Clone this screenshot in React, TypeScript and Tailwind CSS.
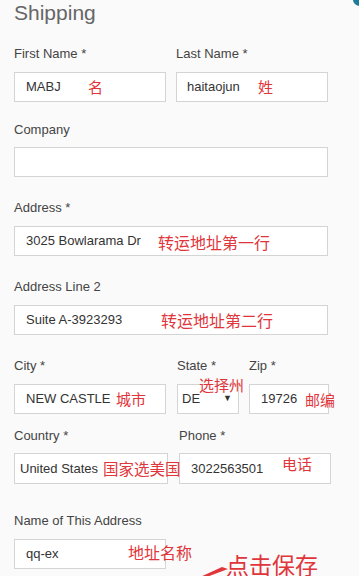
import React from "react";

const sans = "font-['Liberation_Sans','Arimo',Arial,'Noto_Sans_CJK_SC',sans-serif]";
const cjk = "font-['Noto_Sans_CJK_SC','Liberation_Sans',sans-serif]";

function Label({ children }: { children: React.ReactNode }) {
  return <div className="text-[13px] leading-[16px] text-[#444]">{children}</div>;
}

function Field({ value, className = "", pad = "pl-[11px]" }: { value?: string; className?: string; pad?: string }) {
  return (
    <div className={`h-[30px] border border-[#d4d4d4] bg-white flex items-center text-[13px] text-[#333] ${pad} ${className}`}>
      {value}
    </div>
  );
}

function Note({ text, x, y, size = "text-[15px]" }: { text: string; x: number; y: number; size?: string }) {
  return (
    <span
      className={`absolute ${cjk} ${size} leading-none text-[#e0353b] whitespace-nowrap`}
      style={{ left: x, top: y }}
    >
      {text}
    </span>
  );
}

export default function App() {
  return (
    <div className={`relative w-[359px] h-[576px] overflow-hidden bg-[#fafafa] ${sans}`}>
      <div className="px-[14px]">
        <h2 className="text-[21px] leading-[26px] text-[#666]">Shipping</h2>

        <div className="mt-[20px] flex gap-[10px]">
          <div className="w-[152px]">
            <Label>First Name *</Label>
            <div className="mt-[10px]"><Field value="MABJ" /></div>
          </div>
          <div className="w-[152px]">
            <Label>Last Name *</Label>
            <div className="mt-[10px]"><Field value="haitaojun" pad="pl-[10px]" /></div>
          </div>
        </div>

        <div className="mt-[20px] w-[314px]">
          <Label>Company</Label>
          <div className="mt-[9px]"><Field /></div>
        </div>

        <div className="mt-[23px] w-[314px]">
          <Label>Address *</Label>
          <div className="mt-[10px]"><Field value="3025 Bowlarama Dr" /></div>
        </div>

        <div className="mt-[23px] w-[314px]">
          <Label>Address Line 2</Label>
          <div className="mt-[10px]"><Field value="Suite A-3923293" /></div>
        </div>

        <div className="mt-[23px] flex">
          <div className="w-[152px]">
            <Label>City *</Label>
            <div className="mt-[10px]"><Field value="NEW CASTLE" /></div>
          </div>
          <div className="w-[62px] ml-[11px]">
            <Label>State *</Label>
            <div className="mt-[10px]">
              <div className="h-[30px] border border-[#d4d4d4] bg-white flex items-center justify-between pl-[4px] pr-[6px] text-[13px] text-[#333]">
                <span>DE</span>
                <span className="text-[9px]">▼</span>
              </div>
            </div>
          </div>
          <div className="w-[80px] ml-[10px]">
            <Label>Zip *</Label>
            <div className="mt-[10px]"><Field value="19726" /></div>
          </div>
        </div>

        <div className="mt-[14px] flex">
          <div className="w-[154px]">
            <Label>Country *</Label>
            <div className="mt-[9px]"><Field value="United States" pad="pl-[5px]" className="h-[31px]" /></div>
          </div>
          <div className="w-[152px] ml-[11px]">
            <Label>Phone *</Label>
            <div className="mt-[9px]"><Field value="3022563501" className="h-[31px]" /></div>
          </div>
        </div>

        <div className="mt-[29px] w-[152px]">
          <Label>Name of This Address</Label>
          <div className="mt-[10px]"><Field value="qq-ex" /></div>
        </div>
      </div>

      <Note text="名" x={88} y={79} />
      <Note text="姓" x={258} y={79} />
      <Note text="转运地址第一行" x={158} y={234} size="text-[16px]" />
      <Note text="转运地址第二行" x={161} y={312} size="text-[16px]" />
      <Note text="城市" x={116} y={391} />
      <Note text="选择州" x={199} y={377} />
      <Note text="邮编" x={305} y={392} />
      <Note text="国家选美国" x={103} y={461} size="text-[15.5px]" />
      <Note text="电话" x={282} y={456} />
      <Note text="地址名称" x={128} y={544} size="text-[16px]" />
      <Note text="点击保存" x={226} y={553} size="text-[23px]" />

      <svg className="absolute left-[196px] top-[562px]" width="34" height="16" viewBox="0 0 34 16">
        <polygon points="2,16 26,5 32,7 8,16" fill="#e0353b" />
      </svg>

      <div className="absolute left-[353px] top-[-7px] w-[13px] h-[13px] rounded-full bg-[#1e7c96]" />
    </div>
  );
}
